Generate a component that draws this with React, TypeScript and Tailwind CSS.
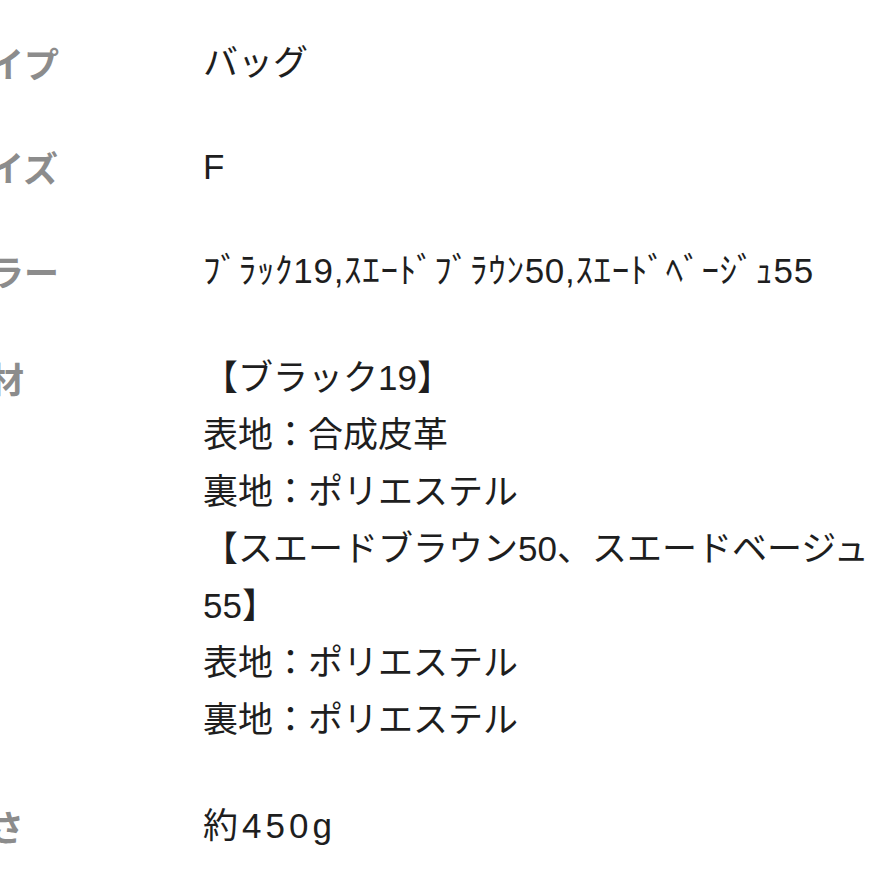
import React from "react";

const rows: { label: string; lines: string[]; track?: string; extra?: string }[] = [
  { label: "タイプ", lines: ["バッグ"] },
  { label: "サイズ", lines: ["F"] },
  { label: "カラー", lines: ["ﾌﾞﾗｯｸ19,ｽｴｰﾄﾞﾌﾞﾗｳﾝ50,ｽｴｰﾄﾞﾍﾞｰｼﾞｭ55"], track: "tracking-[0.7px]" },
  {
    label: "素材",
    lines: [
      "【ブラック19】",
      "表地：合成皮革",
      "裏地：ポリエステル",
      "【スエードブラウン50、スエードベージュ",
      "55】",
      "表地：ポリエステル",
      "裏地：ポリエステル",
    ],
    extra: "pt-[3px]",
  },
  { label: "重さ", lines: ["約450g"], track: "tracking-[4px]", extra: "pt-[2px]" },
];

export default function App() {
  return (
    <div
      className="w-[885px] h-[885px] overflow-hidden bg-white"
      style={{ fontFamily: '"Liberation Sans", "Noto Sans CJK JP", sans-serif' }}
    >
      <div className="ml-[-46px] pt-[34px] flex flex-col gap-[47px]">
        {rows.map((r) => (
          <div key={r.label} className={`flex text-[35px] leading-[57px] ${r.extra ?? ""}`}>
            <div
              className="w-[249px] shrink-0 font-bold text-[#8c8c8c]"
              style={{ fontFamily: '"Noto Sans CJK JP", sans-serif' }}
            >
              {r.label}
            </div>
            <div className={`flex-1 text-[#1e1e1e] whitespace-nowrap ${r.track ?? ""}`}>
              {r.lines.map((l, i) => (
                <div key={i}>{l}</div>
              ))}
            </div>
          </div>
        ))}
      </div>
    </div>
  );
}
